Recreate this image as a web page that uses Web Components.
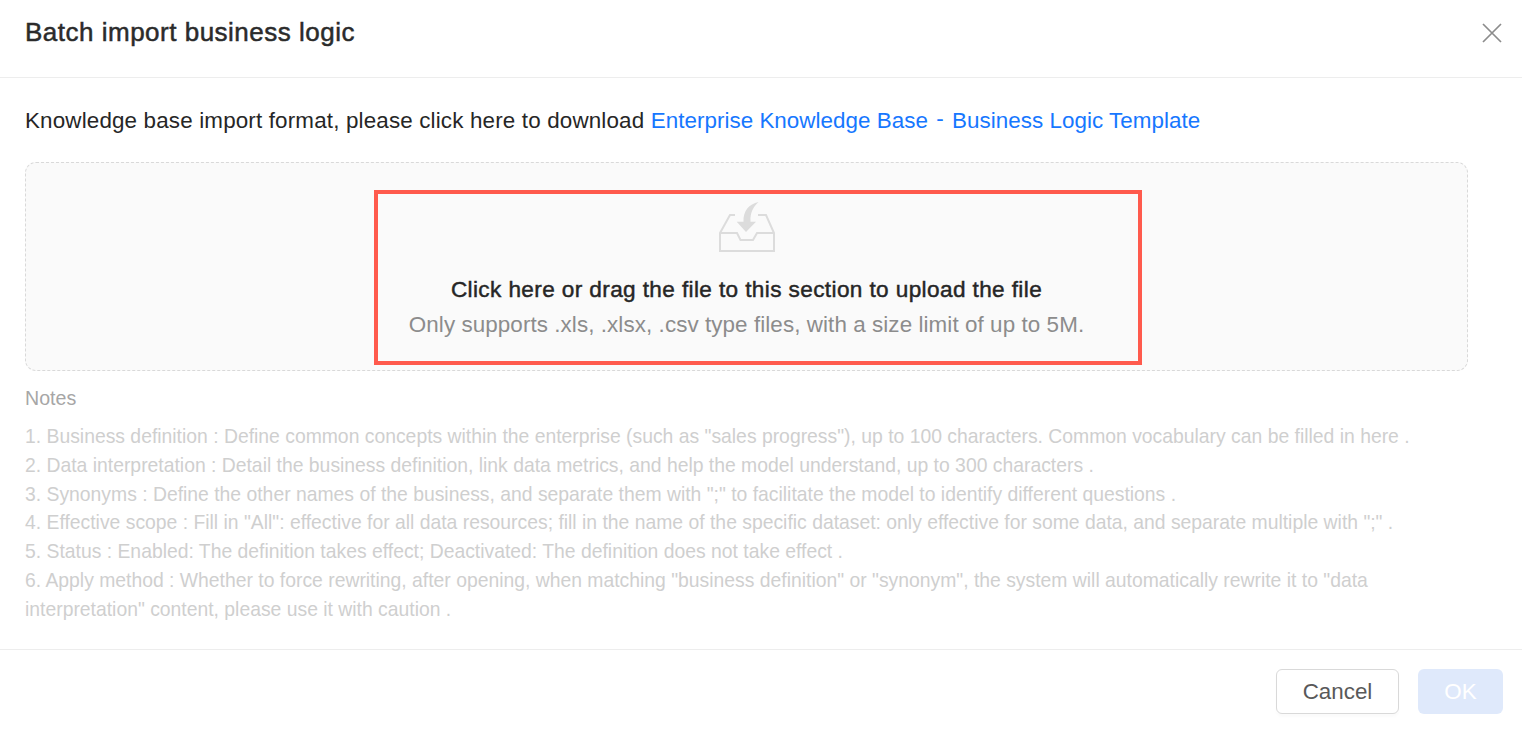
<!DOCTYPE html>
<html lang="en">
<head>
<meta charset="utf-8">
<title>Batch import business logic</title>
<style>
  html, body { margin: 0; height: 100%; background: #fff; }
  body { font-family: "Liberation Sans", Arial, sans-serif; }
</style>
</head>
<body>
<import-dialog>
  <span slot="title">Batch import business logic</span>
  <download-hint></download-hint>
  <upload-zone></upload-zone>
  <import-notes></import-notes>
</import-dialog>

<script>
(function () {
  customElements.define('import-dialog', class ImportDialog extends HTMLElement {
    constructor() {
      super();
      this.attachShadow({ mode: 'open' }).innerHTML = `
        <style>
          :host { display: flex; flex-direction: column; width: 1522px; height: 730px; overflow: hidden; color: #262626; }
          header { display: flex; align-items: center; justify-content: space-between; height: 77px; padding: 0 20px 0 25px; border-bottom: 1px solid #ededed; box-sizing: content-box; }
          h1 { margin: 0 0 13px; font-size: 26px; font-weight: 400; letter-spacing: 0.5px; -webkit-text-stroke: 0.5px #2b2b2b; color: #2b2b2b; }
          .close { display: block; width: 20px; height: 20px; margin-bottom: 11px; }
          main { flex: 1; padding: 29px 54px 0 25px; min-height: 0; }
          footer { display: flex; justify-content: flex-end; gap: 19px; height: 81px; padding: 19px 19px 0 0; box-sizing: border-box; border-top: 1px solid #ededed; }
          button { font: inherit; font-size: 22.4px; height: 45px; border-radius: 6px; padding: 0; }
          .cancel { width: 123px; background: #fff; color: #595959; border: 1px solid #d9d9d9; box-shadow: 0 3px 3px rgba(0, 0, 0, 0.02); }
          .ok { width: 85px; background: #dfe9fb; color: #fff; border: 0; }
        </style>
        <header>
          <h1><slot name="title"></slot></h1>
          <svg class="close" viewBox="0 0 20 20" fill="none" stroke="#8c8c8c" stroke-width="1.7"><path d="M1 1l18 18M19 1L1 19"/></svg>
        </header>
        <main><slot></slot></main>
        <footer>
          <button class="cancel">Cancel</button>
          <button class="ok">OK</button>
        </footer>
      `;
    }
  });

  customElements.define('download-hint', class DownloadHint extends HTMLElement {
    constructor() {
      super();
      this.attachShadow({ mode: 'open' }).innerHTML = `
        <style>
          :host { display: block; font-size: 22.4px; line-height: 28px; letter-spacing: 0.16px; color: #262626; white-space: nowrap; }
          a { color: #1677ff; text-decoration: none; letter-spacing: 0.04px; }
          .dash { padding: 0 2px; vertical-align: 2px; line-height: 0; }
        </style>
        Knowledge base import format, please click here to download <a href="#">Enterprise Knowledge Base <span class="dash">-</span> Business Logic Template</a>
      `;
    }
  });

  customElements.define('upload-zone', class UploadZone extends HTMLElement {
    constructor() {
      super();
      this.attachShadow({ mode: 'open' }).innerHTML = `
        <style>
          :host { display: flex; flex-direction: column; align-items: center; position: relative; box-sizing: border-box; height: 209px; margin-top: 27px; padding-top: 38px; background: #fafafa; border: 1px dashed #d9d9d9; border-radius: 11px; }
          svg { display: block; width: 58px; height: 52px; }
          .title { margin-top: 21px; font-size: 22.6px; line-height: 31px; letter-spacing: 0.38px; -webkit-text-stroke: 0.45px #262626; color: #262626; }
          .sub { margin-top: 4px; font-size: 22.4px; line-height: 31px; letter-spacing: 0.08px; color: #8c8c8c; }
          .mark { position: absolute; left: 348px; top: 27px; width: 768px; height: 175px; box-sizing: border-box; border: 4px solid #ff5a4d; }
        </style>
        <svg viewBox="0 0 58 52" fill="none" stroke="#dcdcdc" stroke-width="2">
          <path d="M17 14H12L2 32V50H56V32L48 14H40"/>
          <path d="M2 32H19L22.5 39H35L39 32H56"/>
          <path d="M40.5 1C31 3 25 10 25.5 20.7H18.7L28 31L38 20.7H32.5C32 12 35 6 40.5 1Z" fill="#dcdcdc" stroke="none"/>
        </svg>
        <div class="title">Click here or drag the file to this section to upload the file</div>
        <div class="sub">Only supports .xls, .xlsx, .csv type files, with a size limit of up to 5M.</div>
        <div class="mark"></div>
      `;
    }
  });

  const NOTES = [
    '1. Business definition : Define common concepts within the enterprise (such as "sales progress"), up to 100 characters. Common vocabulary can be filled in here .',
    '2. Data interpretation : Detail the business definition, link data metrics, and help the model understand, up to 300 characters .',
    '3. Synonyms : Define the other names of the business, and separate them with ";" to facilitate the model to identify different questions .',
    '4. Effective scope : Fill in "All": effective for all data resources; fill in the name of the specific dataset: only effective for some data, and separate multiple with ";" .',
    '5. Status : Enabled: The definition takes effect; Deactivated: The definition does not take effect .',
    '6. Apply method : Whether to force rewriting, after opening, when matching "business definition" or "synonym", the system will automatically rewrite it to "data interpretation" content, please use it with caution .'
  ];

  customElements.define('import-notes', class ImportNotes extends HTMLElement {
    constructor() {
      super();
      const root = this.attachShadow({ mode: 'open' });
      root.innerHTML = `
        <style>
          :host { display: block; margin-top: 13px; font-size: 19.35px; line-height: 28.85px; color: #cfcfcf; }
          .head { color: #a6a6a6; font-size: 19.6px; margin-bottom: 9px; }
          .note { display: block; }
        </style>
        <div class="head">Notes</div>
        <div id="list"></div>
      `;
      const list = root.getElementById('list');
      NOTES.forEach(function (text) {
        const row = document.createElement('span');
        row.className = 'note';
        row.textContent = text;
        list.appendChild(row);
      });
    }
  });
})();
</script>
</body>
</html>
